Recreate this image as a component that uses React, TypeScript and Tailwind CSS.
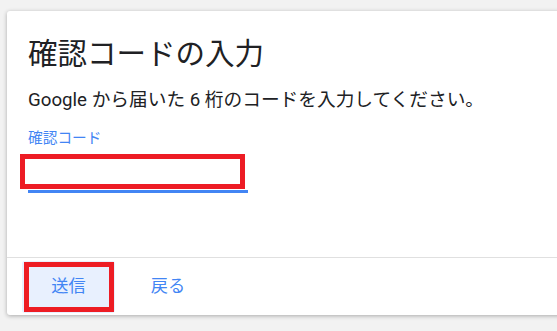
export default function App() {
  const font = { fontFamily: "Roboto, 'Noto Sans CJK JP', sans-serif" };

  return (
    <div
      className="h-[331px] w-full overflow-hidden bg-[#f2f2f2] pl-[7px] pt-[11px]"
      style={font}
    >
      <div className="flex h-[304px] w-[580px] flex-col rounded-[3px] bg-white shadow-[0_1px_4px_rgba(0,0,0,0.3)]">
        <div className="flex-1 pl-[21px] pt-[25px]">
          <h1 className="text-[29.5px] leading-[36px] font-normal text-[#202124]">
            確認コードの入力
          </h1>
          <p className="mt-[16px] text-[18.7px] leading-[24px] text-[#202124]">
            Google から届いた 6 桁のコードを入力してください。
          </p>
          <label className="mt-[17px] block text-[14.7px] leading-[18px] text-[#4285f4]">
            確認コード
          </label>
          <div className="relative mt-[1px] h-[45px] w-[220px] border-b-[3px] border-[#4285f4]">
            <input className="h-full w-full bg-transparent text-[18px] outline-none" />
            <div className="pointer-events-none absolute left-[-8px] top-[6px] h-[35px] w-[225px] border-[5px] border-[#ed1c24]" />
          </div>
        </div>
        <div className="h-[58px] border-t border-[#e0e0e0]">
          <div className="flex items-center pl-[15px] pt-[3px]">
            <button className="relative h-[52px] w-[93px] rounded-[3px] bg-[#e8f0fe] text-[17.2px] text-[#4285f4]">
              送信
              <span className="pointer-events-none absolute left-[2px] top-[1px] h-[50px] w-[90px] border-[5px] border-[#ed1c24]" />
            </button>
            <button className="ml-[10px] h-[52px] w-[86px] text-[17.2px] text-[#4285f4]">
              戻る
            </button>
          </div>
        </div>
      </div>
    </div>
  );
}
